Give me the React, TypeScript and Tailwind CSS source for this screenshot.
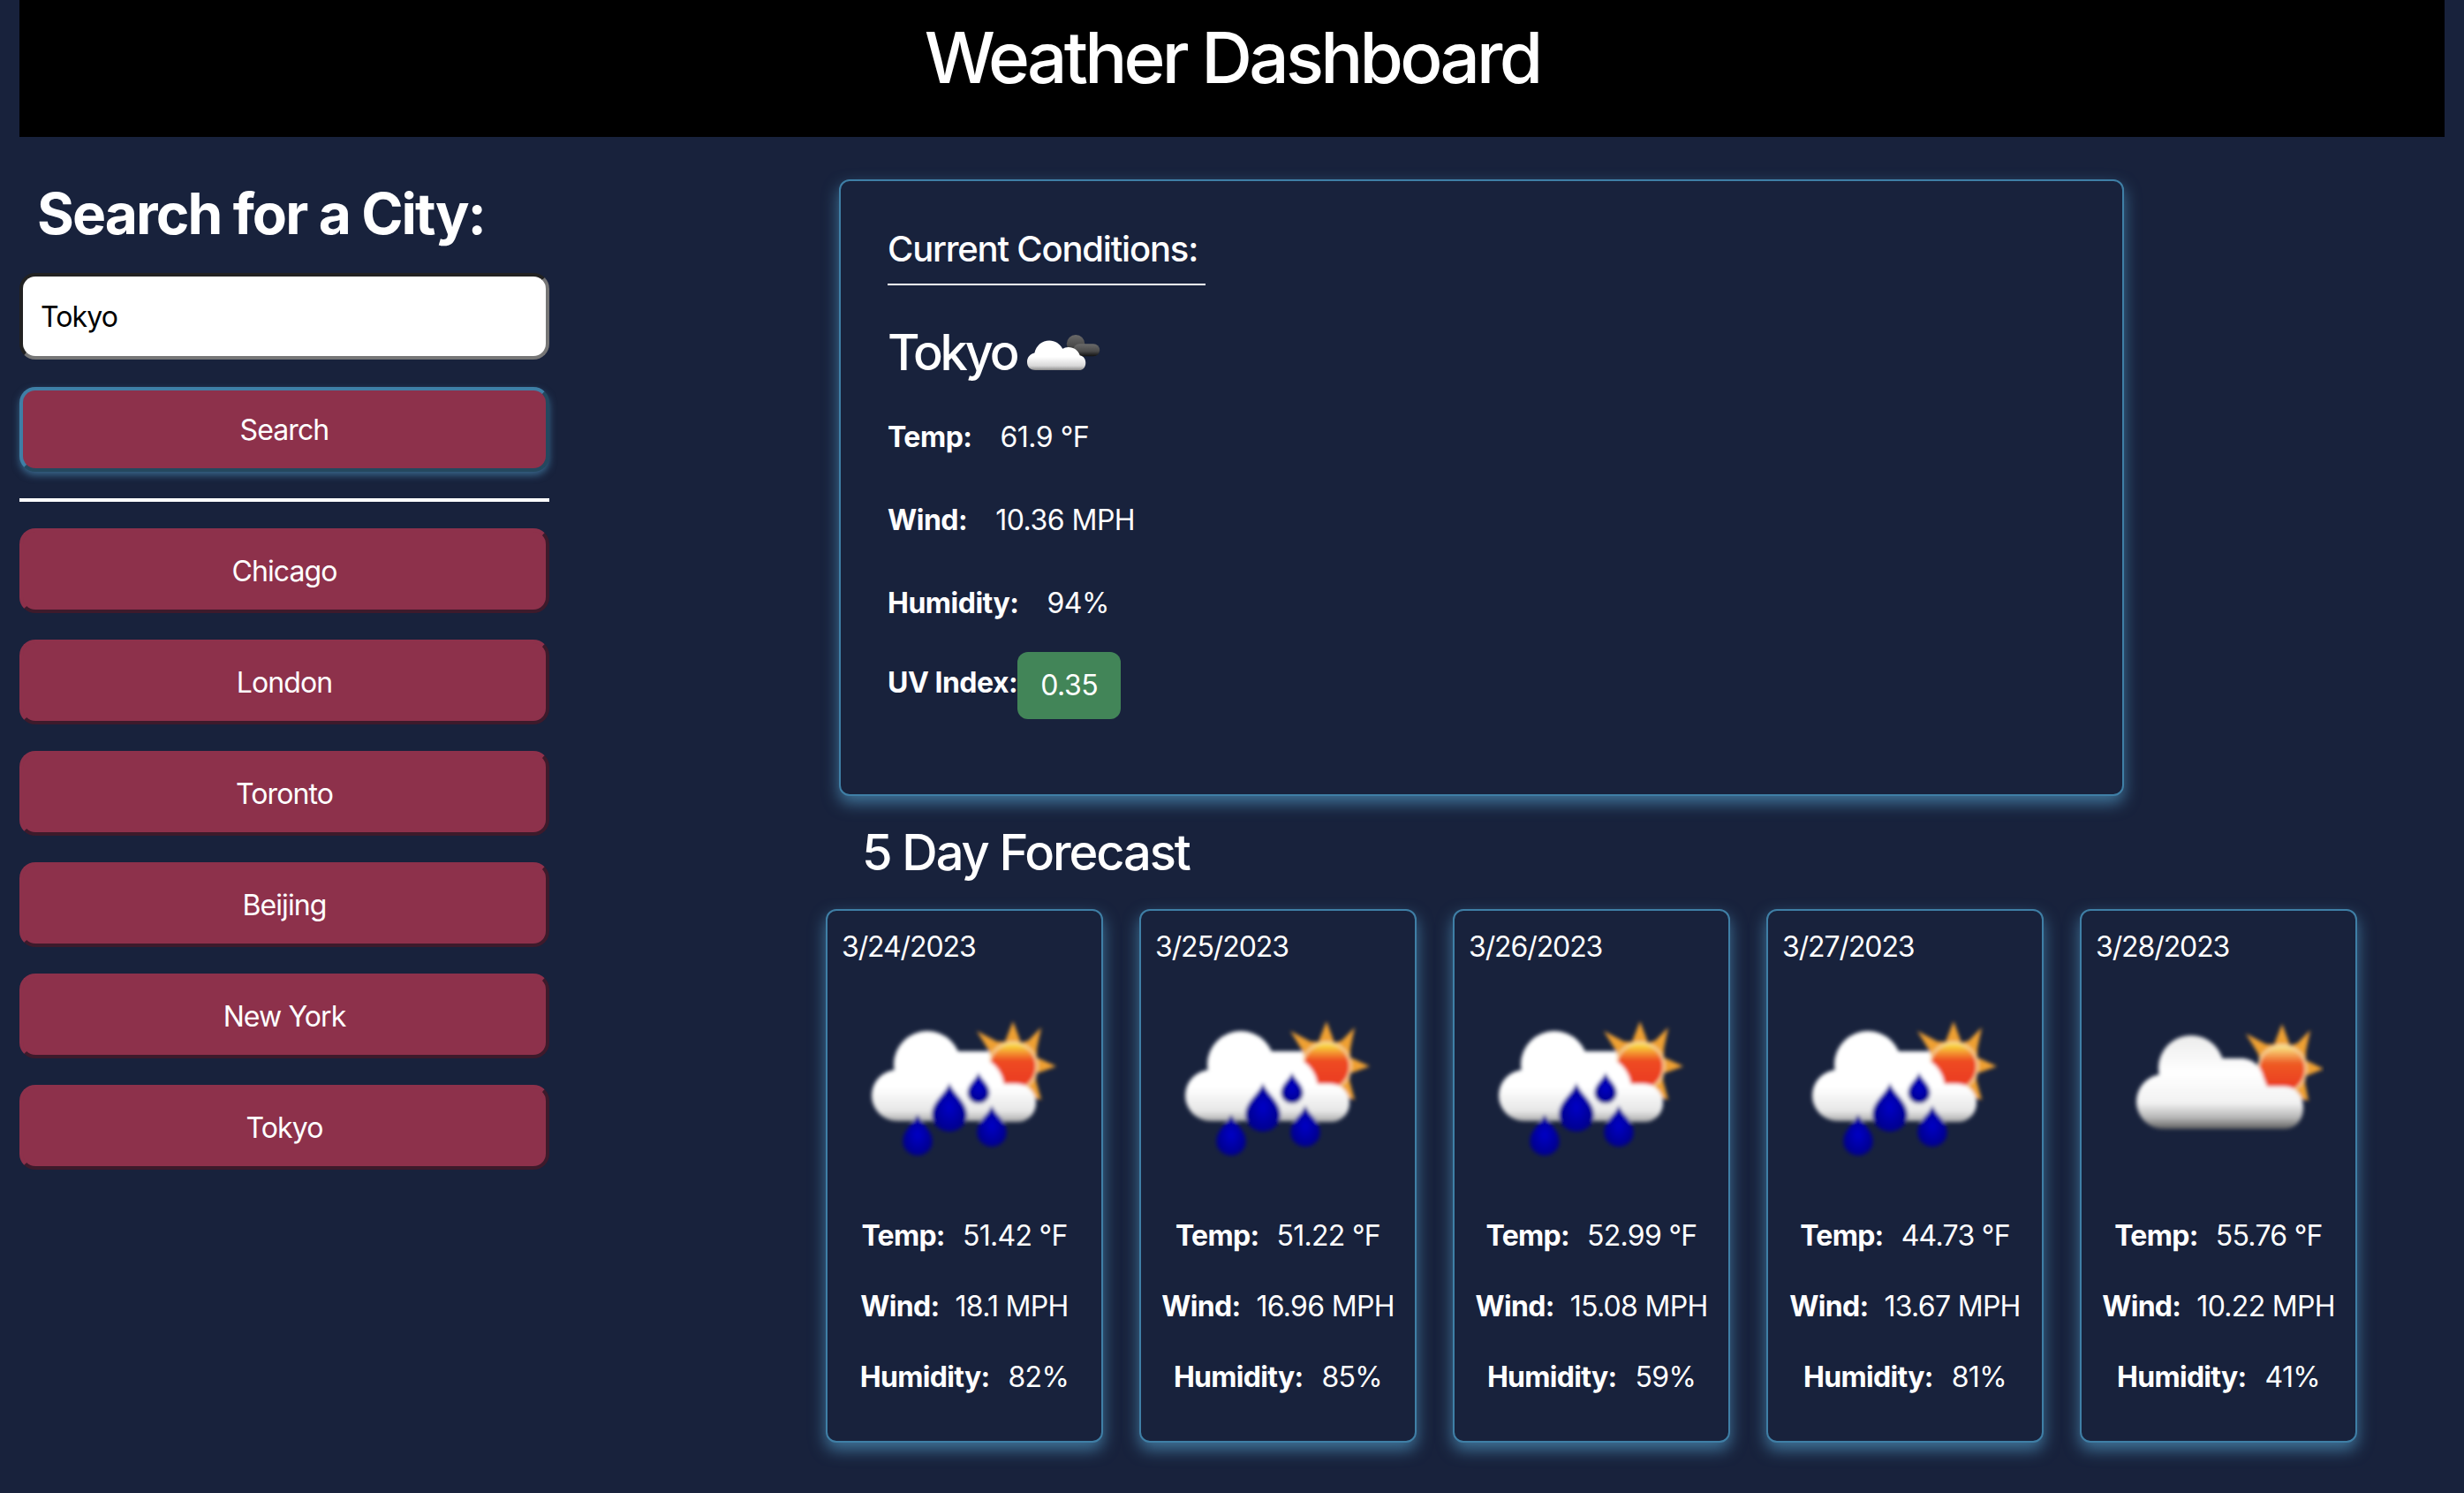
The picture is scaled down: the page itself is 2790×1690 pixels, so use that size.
const CITIES = ["Chicago", "London", "Toronto", "Beijing", "New York", "Tokyo"];

const FORECAST = [
  { date: "3/24/2023", temp: "51.42 °F", wind: "18.1 MPH", humidity: "82%", rain: true },
  { date: "3/25/2023", temp: "51.22 °F", wind: "16.96 MPH", humidity: "85%", rain: true },
  { date: "3/26/2023", temp: "52.99 °F", wind: "15.08 MPH", humidity: "59%", rain: true },
  { date: "3/27/2023", temp: "44.73 °F", wind: "13.67 MPH", humidity: "81%", rain: true },
  { date: "3/28/2023", temp: "55.76 °F", wind: "10.22 MPH", humidity: "41%", rain: false },
];

const GLOW = "shadow-[0_8px_18px_rgba(70,130,169,0.85)]";

function Drop({ x, y, r }: { x: number; y: number; r: number }) {
  return (
    <path
      d={`M${x} ${y - r * 1.9} C${x + r * 0.3} ${y - r * 1.2} ${x + r * 1.05} ${y - r * 0.8} ${x + r * 1.05} ${y} A${r * 1.05} ${r} 0 1 1 ${x - r * 1.05} ${y} C${x - r * 1.05} ${y - r * 0.8} ${x - r * 0.3} ${y - r * 1.2} ${x} ${y - r * 1.9}Z`}
      fill="url(#dropFill)"
    />
  );
}

function Sun({ cx, cy }: { cx: number; cy: number }) {
  return (
    <g>
      <polygon
        transform={`translate(${cx} ${cy})`}
        points="0,-51 9,-27 17,-29 32,-44 27,-20 27,-10 49,0 27,8 26,16 32,38 -6,28 -20,20 -27,-17 -41,-40 -18,-28 -9,-28"
        fill="#efa032"
      />
      <circle cx={cx} cy={cy} r={28} fill="#f7e3b0" />
      <circle cx={cx} cy={cy} r={26} fill="url(#sunFill)" />
    </g>
  );
}

function RainIcon() {
  return (
    <svg width="240" height="240" viewBox="0 0 240 240" className="mx-auto block">
      <defs>
        <linearGradient id="rainCloud" gradientUnits="userSpaceOnUse" x1="0" y1="57" x2="0" y2="160">
          <stop offset="0.62" stopColor="#ffffff" />
          <stop offset="0.88" stopColor="#e6e6e6" />
          <stop offset="1" stopColor="#a8a8a8" />
        </linearGradient>
        <linearGradient id="sunFill" x1="0" y1="0" x2="0" y2="1">
          <stop offset="0.05" stopColor="#f9d53c" />
          <stop offset="0.38" stopColor="#ee4a22" />
          <stop offset="1" stopColor="#ea3a20" />
        </linearGradient>
        <radialGradient id="dropFill">
          <stop offset="0" stopColor="#0000c8" />
          <stop offset="1" stopColor="#00008c" />
        </radialGradient>
        <filter id="soft" x="-10%" y="-10%" width="120%" height="120%">
          <feGaussianBlur stdDeviation="2" />
        </filter>
      </defs>
      <g filter="url(#soft)">
        <rect x="90" y="80" width="70" height="70" fill="url(#rainCloud)" rx="12" />
        <Sun cx={175} cy={97} />
        <g fill="url(#rainCloud)">
          <circle cx="78" cy="95" r="38" />
          <circle cx="44" cy="130" r="29" />
          <rect x="44" y="100" width="100" height="59" />
          <circle cx="128" cy="122" r="37" />
          <rect x="128" y="117" width="73" height="43" rx="21" />
        </g>
        <Drop x={67} y={182} r={16} />
        <Drop x={103} y={152} r={19} />
        <Drop x={136} y={127} r={12} />
        <Drop x={151} y={172} r={16} />
      </g>
    </svg>
  );
}

function CloudIcon() {
  return (
    <svg width="240" height="240" viewBox="0 0 240 240" className="mx-auto block">
      <defs>
        <linearGradient id="plainCloud" gradientUnits="userSpaceOnUse" x1="0" y1="62" x2="0" y2="168">
          <stop offset="0" stopColor="#ececec" />
          <stop offset="0.4" stopColor="#ffffff" />
          <stop offset="0.72" stopColor="#f2f2f2" />
          <stop offset="0.88" stopColor="#b5b5b5" />
          <stop offset="1" stopColor="#5f5f5f" />
        </linearGradient>
        <linearGradient id="sunFillB" x1="0" y1="0" x2="0" y2="1">
          <stop offset="0.05" stopColor="#f8d878" />
          <stop offset="0.38" stopColor="#ee5a24" />
          <stop offset="1" stopColor="#ea3620" />
        </linearGradient>
        <filter id="softB" x="-10%" y="-10%" width="120%" height="120%">
          <feGaussianBlur stdDeviation="2" />
        </filter>
      </defs>
      <g filter="url(#softB)">
        <polygon
          transform="translate(192 100)"
          points="0,-51 9,-27 17,-29 32,-44 27,-20 27,-10 47,0 27,8 26,16 30,36 -6,28 -20,20 -27,-17 -41,-40 -18,-28 -9,-28"
          fill="#efa032"
        />
        <circle cx="192" cy="100" r="28" fill="#f7e3b0" />
        <circle cx="192" cy="100" r="26" fill="url(#sunFillB)" />
        <g fill="url(#plainCloud)">
          <circle cx="89" cy="99" r="37" />
          <circle cx="58" cy="137" r="31" />
          <path d="M120 88h25c12 0 22 6 26 22l4 10h20c13 0 21 11 21 24 0 14-9 24-22 24H60v-60z" />
        </g>
      </g>
    </svg>
  );
}

function SmallCloudIcon() {
  return (
    <svg width="84" height="47" viewBox="0 0 90 50" className="ml-[12px] shrink-0">
      <defs>
        <linearGradient id="smallWhite" x1="0" y1="0" x2="0" y2="1">
          <stop offset="0.55" stopColor="#ffffff" />
          <stop offset="0.85" stopColor="#d8d8d8" />
          <stop offset="1" stopColor="#8a8a8a" />
        </linearGradient>
        <linearGradient id="smallDark" x1="0" y1="0" x2="0" y2="1">
          <stop offset="0" stopColor="#6a6a6a" />
          <stop offset="0.6" stopColor="#4a4a4a" />
          <stop offset="1" stopColor="#111111" />
        </linearGradient>
      </defs>
      <g fill="url(#smallDark)">
        <circle cx="59" cy="14" r="11" />
        <rect x="56" y="14" width="32" height="15" rx="7.5" />
      </g>
      <g fill="url(#smallWhite)">
        <path d="M10 46C3 46 0 41 0 36c0-6 4-10 9-11 2-9 9-15 18-15 7 0 13 4 16 10 2-1 4-2 7-2 7 0 12 4 14 10 5 1 7 5 7 9 0 5-3 9-8 9z" />
      </g>
    </svg>
  );
}

function ForecastCard({ day }: { day: (typeof FORECAST)[number] }) {
  return (
    <div className={`h-[604px] w-[314px] rounded-[12px] border-[2px] border-[#3f7fa6] bg-[#18223c] pl-[16px] pt-[18px] ${GLOW}`}>
      <div className="h-[46px] text-[32px] leading-[46px] tracking-[-1.1px]">{day.date}</div>
      <div className="-ml-[16px] mt-[15px] h-[240px] w-[310px]">{day.rain ? <RainIcon /> : <CloudIcon />}</div>
      <div className="-ml-[16px] mt-[29px] w-[310px] text-center text-[32px] leading-[40px] tracking-[-0.7px]">
        <p className="mb-[40px]">
          <b className="mr-[20px] font-bold">Temp:</b>
          {day.temp}
        </p>
        <p className="mb-[40px]">
          <b className="mr-[18px] font-bold">Wind:</b>
          {day.wind}
        </p>
        <p>
          <b className="mr-[21px] font-bold">Humidity:</b>
          {day.humidity}
        </p>
      </div>
    </div>
  );
}

export default function App() {
  return (
    <div className="min-h-[1690px] bg-[#18223c] px-[22px] text-white [font-family:Inter,'Noto_Sans',sans-serif]">
      <header className="flex h-[155px] items-start justify-center bg-black pt-[15px] text-[80px] leading-[100px] tracking-[-3.8px] [font-weight:550]">
        Weather Dashboard
      </header>

      <main className="flex">
        <aside className="w-[600px] shrink-0 pt-[48px]">
          <h2 className="ml-[20px] text-[64px] leading-[78px] font-bold tracking-[-1.9px]">Search for a City:</h2>
          <input
            defaultValue="Tokyo"
            className="mt-[28px] block h-[98px] w-full rounded-[18px] border-[4px] border-t-[#222222] border-r-[#767676] border-b-[#767676] border-l-[#222222] bg-white pl-[20px] text-[32px] tracking-[-0.9px] text-black"
          />
          <button className="mt-[31px] block h-[96px] w-full rounded-[18px] border-[4px] border-t-[#3f7fa6] border-r-[#24485f] border-b-[#24485f] border-l-[#3f7fa6] bg-[#8d314b] pt-[2px] text-[32px] tracking-[-0.9px] shadow-[0_4px_8px_rgba(70,130,169,0.7)]">
            Search
          </button>
          <hr className="mt-[30px] mb-[30px] border-t-[4px] border-white" />
          <div className="flex flex-col gap-[30px]">
            {CITIES.map((city) => (
              <button
                key={city}
                className="block h-[96px] w-full rounded-[18px] border-[4px] border-t-[#8d314b] border-r-[#3d1a2b] border-b-[#3d1a2b] border-l-[#8d314b] bg-[#8d314b] pt-[2px] text-[32px] tracking-[-0.9px]"
              >
                {city}
              </button>
            ))}
          </div>
        </aside>

        <section className="ml-[313px] flex-1 pt-[48px]">
          <div className={`ml-[15px] h-[698px] w-[1455px] rounded-[12px] border-[2px] border-[#3f7fa6] bg-[#18223c] pl-[53px] pt-[51px] ${GLOW}`}>
            <h3 className="w-[360px] border-b-[2px] border-white pb-[13px] text-[40px] leading-[52px] font-medium tracking-[-1.2px] whitespace-nowrap">
              Current Conditions:
            </h3>
            <div className="mt-[42px] flex h-[68px] items-center text-[56px] leading-[68px] font-medium tracking-[-3.2px]">
              Tokyo
              <SmallCloudIcon />
            </div>
            <div className="mt-[42px] text-[32px] leading-[40px] tracking-[-0.5px]">
              <p className="mb-[54px]">
                <b className="mr-[32px] font-bold">Temp:</b>61.9 °F
              </p>
              <p className="mb-[54px]">
                <b className="mr-[32px] font-bold">Wind:</b>10.36 MPH
              </p>
              <p className="mb-[35px]">
                <b className="mr-[32px] font-bold">Humidity:</b>94%
              </p>
              <p className="flex items-start">
                <b className="mt-[15px] font-bold">UV Index:</b>
                <span className="flex h-[76px] w-[117px] items-center justify-center rounded-[12px] bg-[#428558]">0.35</span>
              </p>
            </div>
          </div>

          <h3 className="mt-[30px] ml-[41px] text-[56px] leading-[68px] font-medium tracking-[-2.1px]">5 Day Forecast</h3>

          <div className="mt-[30px] flex gap-[41px]">
            {FORECAST.map((day) => (
              <ForecastCard key={day.date} day={day} />
            ))}
          </div>
        </section>
      </main>
    </div>
  );
}
